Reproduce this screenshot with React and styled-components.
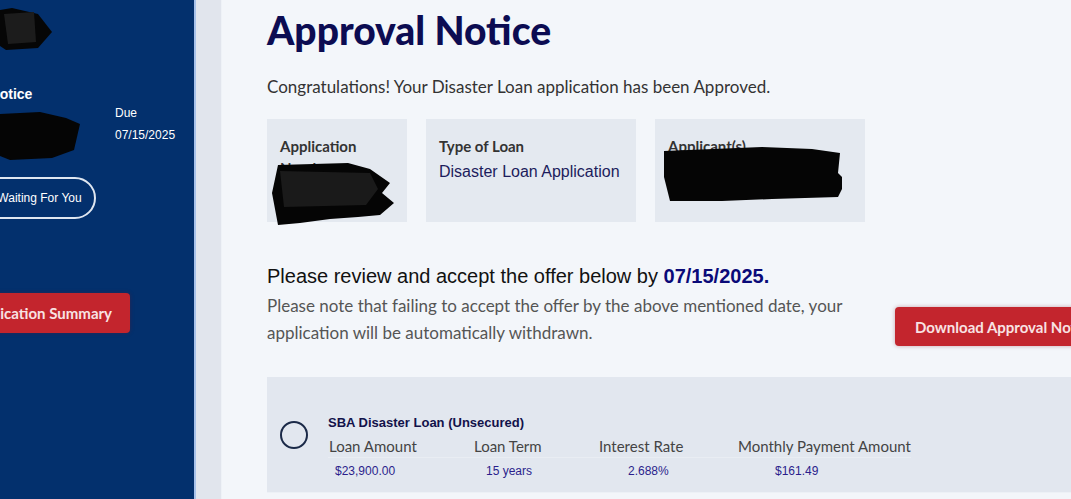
import React from "react";
import styled, { createGlobalStyle } from "styled-components";

const Global = createGlobalStyle`
  html, body { margin: 0; padding: 0; }
  body { overflow: hidden; background: #f3f6fa; font-family: "Lato", "Liberation Sans", sans-serif; }
`;

const Page = styled.div`
  display: flex;
  width: 1071px;
  height: 499px;
  overflow: hidden;
`;

const Sidebar = styled.aside`
  position: relative;
  flex: 0 0 194px;
  background: #03306d;
  border-right: 2px solid #a8c2ea;
  overflow: hidden;
`;

const Gutter = styled.div`
  flex: 0 0 25px;
  background: #e1e5ed;
  border-right: 1px solid #eef2f7;
`;

const SideInner = styled.div`
  margin-left: -75px;
  padding-top: 86px;
  display: flex;
  flex-direction: column;
`;

const SideTitle = styled.div`
  font-family: "Liberation Sans", Arial, sans-serif;
  font-weight: 700;
  font-size: 14px;
  color: #ffffff;
  line-height: 16px;
`;

const SideRow = styled.div`
  display: flex;
  margin-top: 4px;
`;

const SideLeft = styled.div`
  width: 190px;
  display: flex;
  flex-direction: column;
`;

const Hidden = styled.div`
  height: ${(p) => p.h}px;
`;

const PillButton = styled.div`
  margin-left: 52px;
  margin-top: 21px;
  width: 119px;
  height: 42px;
  box-sizing: border-box;
  border: 2px solid #dfe6f0;
  border-radius: 21px;
  display: flex;
  align-items: center;
  justify-content: center;
  padding-left: 6px;
  font-family: "Liberation Sans", Arial, sans-serif;
  font-size: 12px;
  color: #ffffff;
`;

const DueCol = styled.div`
  display: flex;
  flex-direction: column;
  gap: 8px;
  font-family: "Liberation Sans", Arial, sans-serif;
  font-size: 12px;
  color: #ffffff;
  line-height: 14px;
`;

const RedButton = styled.div`
  flex: none;
  display: inline-flex;
  align-items: center;
  height: ${(p) => p.h || 40}px;
  padding: 0 ${(p) => p.px || 20}px;
  box-sizing: border-box;
  background: #c3252d;
  border-radius: 4px;
  box-shadow: 0 0 4px rgba(120, 20, 30, 0.35);
  font-family: "Lato", "Liberation Sans", sans-serif;
  font-weight: 700;
  font-size: 15px;
  color: #f8e2e3;
  white-space: nowrap;
`;

const SummaryButton = styled(RedButton)`
  margin-left: 27px;
  margin-top: 74px;
  width: 178px;
  justify-content: flex-end;
  padding-right: 18px;
`;

const Main = styled.main`
  flex: 1;
  min-width: 0;
  padding-left: 45px;
  overflow: hidden;
  background: #f3f6fa;
`;

const Heading = styled.h1`
  margin: 7px 0 0;
  font-family: "Lato", sans-serif;
  font-weight: 900;
  font-size: 39px;
  line-height: 46px;
  color: #0c0c52;
`;

const Lead = styled.p`
  margin: 24px 0 0;
  font-size: 17px;
  line-height: 20px;
  color: #333;
`;

const Cards = styled.div`
  display: flex;
  gap: 19px;
  margin-top: 22px;
`;

const Card = styled.div`
  position: relative;
  width: ${(p) => p.w}px;
  height: 103px;
  box-sizing: border-box;
  background: #e4e9f0;
  padding: 16px 13px;
`;

const CardLabel = styled.div`
  font-weight: 700;
  font-size: 15px;
  line-height: 22px;
  color: #333;
`;

const CardValue = styled.div`
  margin-top: 6px;
  font-family: "Liberation Sans", Arial, sans-serif;
  font-size: 16px;
  color: #1c1c5c;
`;

const Blob = styled.svg`
  position: absolute;
  left: ${(p) => p.x}px;
  top: ${(p) => p.y}px;
  pointer-events: none;
`;

const Review = styled.div`
  margin-top: 42px;
  display: flex;
  align-items: flex-start;
`;

const ReviewText = styled.div`
  flex: none;
  width: 628px;
`;

const ReviewLine = styled.div`
  font-family: "Liberation Sans", Arial, sans-serif;
  font-size: 20px;
  line-height: 24px;
  color: #111;
`;

const DateStrong = styled.strong`
  color: #0a0a78;
`;

const Note = styled.p`
  margin: 4px 0 0;
  font-size: 17px;
  line-height: 27px;
  color: #555;
`;

const DownloadButton = styled(RedButton)`
  margin-top: 43px;
`;

const Offer = styled.section`
  margin-top: 31px;
  height: 116px;
  box-sizing: border-box;
  background: #e2e7ef;
  display: flex;
  align-items: flex-start;
  padding: 38px 0 0 13px;
  border-bottom: 1px solid #edf1f6;
`;

const Radio = styled.div`
  flex: none;
  width: 24px;
  height: 24px;
  border: 2.5px solid #1b2a48;
  border-radius: 50%;
  margin-top: 6px;
`;

const OfferBody = styled.div`
  margin-left: 20px;
`;

const OfferTitle = styled.div`
  font-family: "Liberation Sans", Arial, sans-serif;
  font-weight: 700;
  font-size: 13px;
  line-height: 16px;
  color: #12124a;
`;

const Grid = styled.div`
  display: grid;
  grid-template-columns: 145px 125px 139px auto;
  margin-top: 4px;
`;

const ColHead = styled.div`
  font-size: 15px;
  line-height: 22px;
  color: #444;
  padding-left: 1px;
  border-bottom: 1px solid #e9edf3;
`;

const ColValue = styled.div`
  margin-top: 6px;
  padding-left: ${(p) => p.off}px;
  font-family: "Liberation Sans", Arial, sans-serif;
  font-size: 12px;
  color: #2b1e8c;
`;

const cols = [
  { head: "Loan Amount", value: "$23,900.00", off: 7 },
  { head: "Loan Term", value: "15 years", off: 13 },
  { head: "Interest Rate", value: "2.688%", off: 30 },
  { head: "Monthly Payment Amount", value: "$161.49", off: 38 },
];

export default function App() {
  return (
    <>
      <Global />
      <Page>
        <Sidebar>
          <SideInner>
            <SideTitle>Approval Notice</SideTitle>
            <SideRow>
              <SideLeft>
                <Hidden h={50} />
                <PillButton>Waiting For You</PillButton>
              </SideLeft>
              <DueCol>
                <span>Due</span>
                <span>07/15/2025</span>
              </DueCol>
            </SideRow>
            <SummaryButton>Application Summary</SummaryButton>
          </SideInner>
          <Blob x={0} y={6} width="54" height="44">
            <polygon points="0,4 12,2 38,8 52,26 38,42 6,44 0,40" fill="#060606" />
            <polygon points="4,8 34,6 36,36 8,38" fill="#1c1c1c" />
          </Blob>
          <Blob x={0} y={110} width="82" height="50">
            <polygon points="0,4 40,2 66,8 80,14 74,40 52,48 10,50 0,46" fill="#050505" />
          </Blob>
        </Sidebar>
        <Gutter />
        <Main>
          <Heading>Approval Notice</Heading>
          <Lead>Congratulations! Your Disaster Loan application has been Approved.</Lead>
          <Cards>
            <Card w={140}>
              <CardLabel>Application</CardLabel>
              <CardLabel>Number</CardLabel>
              <Blob x={3} y={44} width="130" height="64">
                <polygon points="8,2 78,0 100,6 120,20 112,30 124,40 110,52 88,54 60,56 30,60 8,62 2,30" fill="#050505" />
                <polygon points="10,8 100,10 108,26 96,42 14,44" fill="#1a1a1a" />
              </Blob>
            </Card>
            <Card w={210}>
              <CardLabel>Type of Loan</CardLabel>
              <CardValue>Disaster Loan Application</CardValue>
            </Card>
            <Card w={210}>
              <CardLabel>Applicant(s)</CardLabel>
              <Blob x={7} y={28} width="180" height="58">
                <polygon points="2,4 100,0 150,2 178,6 176,26 184,34 176,50 110,52 60,54 8,54 2,30" fill="#050505" />
              </Blob>
            </Card>
          </Cards>
          <Review>
            <ReviewText>
              <ReviewLine>
                Please review and accept the offer below by <DateStrong>07/15/2025.</DateStrong>
              </ReviewLine>
              <Note>
                Please note that failing to accept the offer by the above mentioned date, your
                <br />
                application will be automatically withdrawn.
              </Note>
            </ReviewText>
            <DownloadButton h={39}>Download Approval Notice</DownloadButton>
          </Review>
          <Offer>
            <Radio />
            <OfferBody>
              <OfferTitle>SBA Disaster Loan (Unsecured)</OfferTitle>
              <Grid>
                {cols.map((c) => (
                  <ColHead key={c.head}>{c.head}</ColHead>
                ))}
                {cols.map((c) => (
                  <ColValue key={c.value} off={c.off}>
                    {c.value}
                  </ColValue>
                ))}
              </Grid>
            </OfferBody>
          </Offer>
        </Main>
      </Page>
    </>
  );
}
